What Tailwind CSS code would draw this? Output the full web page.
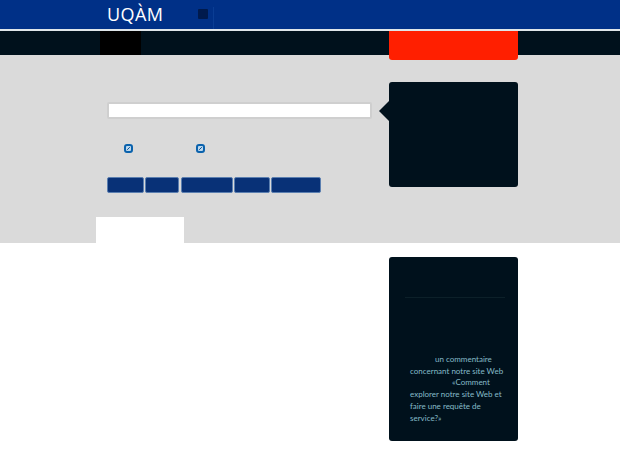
<!DOCTYPE html>
<html>
<head>
<meta charset="utf-8">
<script src="https://cdn.jsdelivr.net/npm/@tailwindcss/browser@4"></script>
</head>
<body class="bg-white font-['Lato',sans-serif] overflow-hidden">
<div class="w-[620px] h-[466px] overflow-hidden flex flex-col">
  <header class="h-[31px] bg-[#003087] border-b-[2px] border-[#dfe6ea] shrink-0 flex pl-[107px]">
    <div class="w-[57px] pt-[2px] text-white text-[18px] font-medium leading-[24px] tracking-[0.4px] whitespace-nowrap font-['Open_Sans',sans-serif]">UQÀM</div>
    <div class="ml-[34px] mt-[9px] w-[10px] h-[10px] rounded-[1px] bg-[#001a4d]"></div>
    <div class="ml-[5px] mt-[7px] w-px h-[22px] bg-[#0a3d94]"></div>
  </header>
  <nav class="h-[24px] bg-[#00111c] shrink-0 flex pl-[100px] relative z-10">
    <div class="w-[41px] h-[24px] bg-black"></div>
    <div class="ml-[248px] w-[129px] h-[29px] bg-[#ff1f00] rounded-b-[3px]"></div>
  </nav>
  <section class="h-[188px] bg-[#dadada] shrink-0 flex relative">
    <div class="w-[389px] shrink-0 flex flex-col">
      <div class="ml-[107px] mt-[47px] w-[265px] h-[17px] bg-white border-2 border-[#cfcfcf] rounded-[2px]"></div>
      <div class="ml-[124px] mt-[25px] flex gap-[63px]">
        <svg class="w-[9px] h-[9px]" viewBox="0 0 9 9"><rect x="1" y="1" width="7" height="7" rx="2" fill="#bcd8ee" stroke="#0a62ad" stroke-width="2"/><path d="M3.2 5.8 L5.8 3.2" stroke="#0a4f8f" stroke-width="1"/></svg>
        <svg class="w-[9px] h-[9px]" viewBox="0 0 9 9"><rect x="1" y="1" width="7" height="7" rx="2" fill="#bcd8ee" stroke="#0a62ad" stroke-width="2"/><path d="M3.2 5.8 L5.8 3.2" stroke="#0a4f8f" stroke-width="1"/></svg>
      </div>
      <div class="ml-[107px] mt-[24px] flex gap-px h-[16px]">
        <div class="w-[37px] rounded-[2px] bg-[#083177] border border-[#5b7fb0]"></div>
        <div class="w-[34px] rounded-[2px] bg-[#083177] border border-[#5b7fb0]"></div>
        <div class="w-[52px] ml-px rounded-[2px] bg-[#083177] border border-[#5b7fb0]"></div>
        <div class="w-[36px] rounded-[2px] bg-[#083177] border border-[#5b7fb0]"></div>
        <div class="w-[50px] rounded-[2px] bg-[#083177] border border-[#5b7fb0]"></div>
      </div>
      <div class="ml-[96px] mt-auto w-[88px] h-[26px] bg-white"></div>
    </div>
    <aside class="mt-[27px] w-[129px] h-[105px] bg-[#00111c] rounded-[3px] relative">
      <span class="absolute -left-[10px] top-[19px] w-0 h-0 border-y-[10px] border-y-transparent border-r-[10px] border-r-[#00111c]"></span>
    </aside>
  </section>
  <main class="flex-1 flex">
    <div class="w-[389px] shrink-0"></div>
    <aside class="mt-[14px] w-[129px] h-[184px] bg-[#00111c] rounded-[3px] pl-[21px] pr-[13px] pt-[40px] text-[#86bcc9] text-[8px] leading-[11.7px] whitespace-nowrap">
      <div class="h-px bg-[#0c2029] -ml-[5px]"></div>
      <p class="mt-[56px]"><span class="pl-[25px]">un commentaire</span><br>concernant notre site Web<br><span class="pl-[42px]">«Comment</span><br>explorer notre site Web et<br>faire une requête de<br>service?»</p>
    </aside>
  </main>
</div>
</body>
</html>
